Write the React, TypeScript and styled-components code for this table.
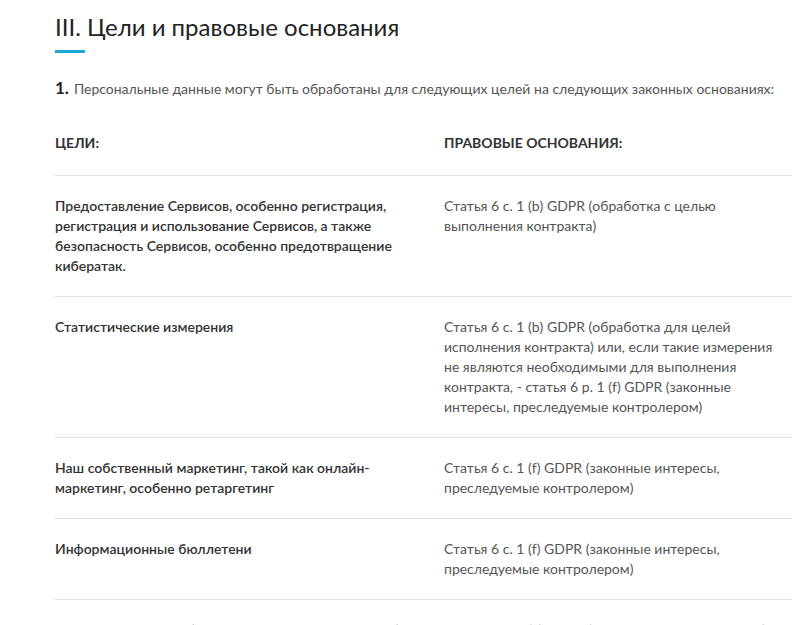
import React from 'react';
import { styled, createGlobalStyle } from 'styled-components';

const GlobalStyle = createGlobalStyle`
  body {
    margin: 0;
    background: #ffffff;
    font-family: Lato, 'Open Sans', sans-serif;
  }
`;

type Row = { purpose: string; basis: string };

const rows: Row[] = [
  {
    purpose:
      'Предоставление Сервисов, особенно регистрация, регистрация и использование Сервисов, а также безопасность Сервисов, особенно предотвращение кибератак.',
    basis: 'Статья 6 с. 1 (b) GDPR (обработка с целью выполнения контракта)',
  },
  {
    purpose: 'Статистические измерения',
    basis:
      'Статья 6 с. 1 (b) GDPR (обработка для целей исполнения контракта) или, если такие измерения не являются необходимыми для выполнения контракта, - статья 6 р. 1 (f) GDPR (законные интересы, преследуемые контролером)',
  },
  {
    purpose: 'Наш собственный маркетинг, такой как онлайн-маркетинг, особенно ретаргетинг',
    basis: 'Статья 6 с. 1 (f) GDPR (законные интересы, преследуемые контролером)',
  },
  {
    purpose: 'Информационные бюллетени',
    basis: 'Статья 6 с. 1 (f) GDPR (законные интересы, преследуемые контролером)',
  },
  {
    purpose: 'Внешний маркетинг (персонализированная реклама)',
    basis: 'Статья 6 с. 1 (a) GDPR (согласие субъекта данных)',
  },
];

const App = () => {
  return (
    <>
      <GlobalStyle />
      <Style.Page>
        <Style.Title>III. Цели и правовые основания</Style.Title>
        <Style.Accent />
        <Style.Lead>
          <Style.Num>1.</Style.Num>
          <span>
            Персональные данные могут быть обработаны для следующих целей на следующих законных
            основаниях:
          </span>
        </Style.Lead>
        <Style.Table>
          <Style.HeadRow>
            <Style.HeadCell>ЦЕЛИ:</Style.HeadCell>
            <Style.HeadCell>ПРАВОВЫЕ ОСНОВАНИЯ:</Style.HeadCell>
          </Style.HeadRow>
          {rows.map((row, idx) => (
            <Style.Row key={'purpose-row-' + idx}>
              <Style.Purpose>{row.purpose}</Style.Purpose>
              <Style.Basis>{row.basis}</Style.Basis>
            </Style.Row>
          ))}
        </Style.Table>
      </Style.Page>
    </>
  );
};

export default App;

const Style = {
  Page: styled.div`
    padding: 12px 16px 0 55px;
    height: 625px;
    overflow: hidden;
    box-sizing: border-box;
  `,
  Title: styled.h2`
    margin: 0;
    font-size: 24px;
    font-weight: 400;
    line-height: 30px;
    color: #222;
  `,
  Accent: styled.div`
    width: 30px;
    height: 3px;
    margin-top: 8px;
    background: #1ba7d8;
  `,
  Lead: styled.p`
    margin: 25px 0 0;
    display: flex;
    align-items: baseline;
    gap: 5px;
    font-size: 14px;
    line-height: 20px;
    color: #555;
  `,
  Num: styled.span`
    font-size: 17px;
    font-weight: 700;
    color: #222;
  `,
  Table: styled.div`
    margin-top: 34px;
    width: 737px;
    display: flex;
    flex-direction: column;
  `,
  HeadRow: styled.div`
    display: grid;
    grid-template-columns: 389px 1fr;
    padding-bottom: 22px;
    border-bottom: 1px solid #e0e0e0;
  `,
  HeadCell: styled.div`
    font-size: 14px;
    font-weight: 700;
    line-height: 20px;
    color: #333;
  `,
  Row: styled.div`
    display: grid;
    grid-template-columns: 389px 1fr;
    padding: 20px 0;
    border-bottom: 1px solid #e0e0e0;
  `,
  Purpose: styled.div`
    padding-right: 30px;
    font-size: 14px;
    font-weight: 600;
    line-height: 20px;
    color: #333;
  `,
  Basis: styled.div`
    padding-right: 14px;
    font-size: 14px;
    font-weight: 400;
    line-height: 20px;
    color: #555;
  `,
};
